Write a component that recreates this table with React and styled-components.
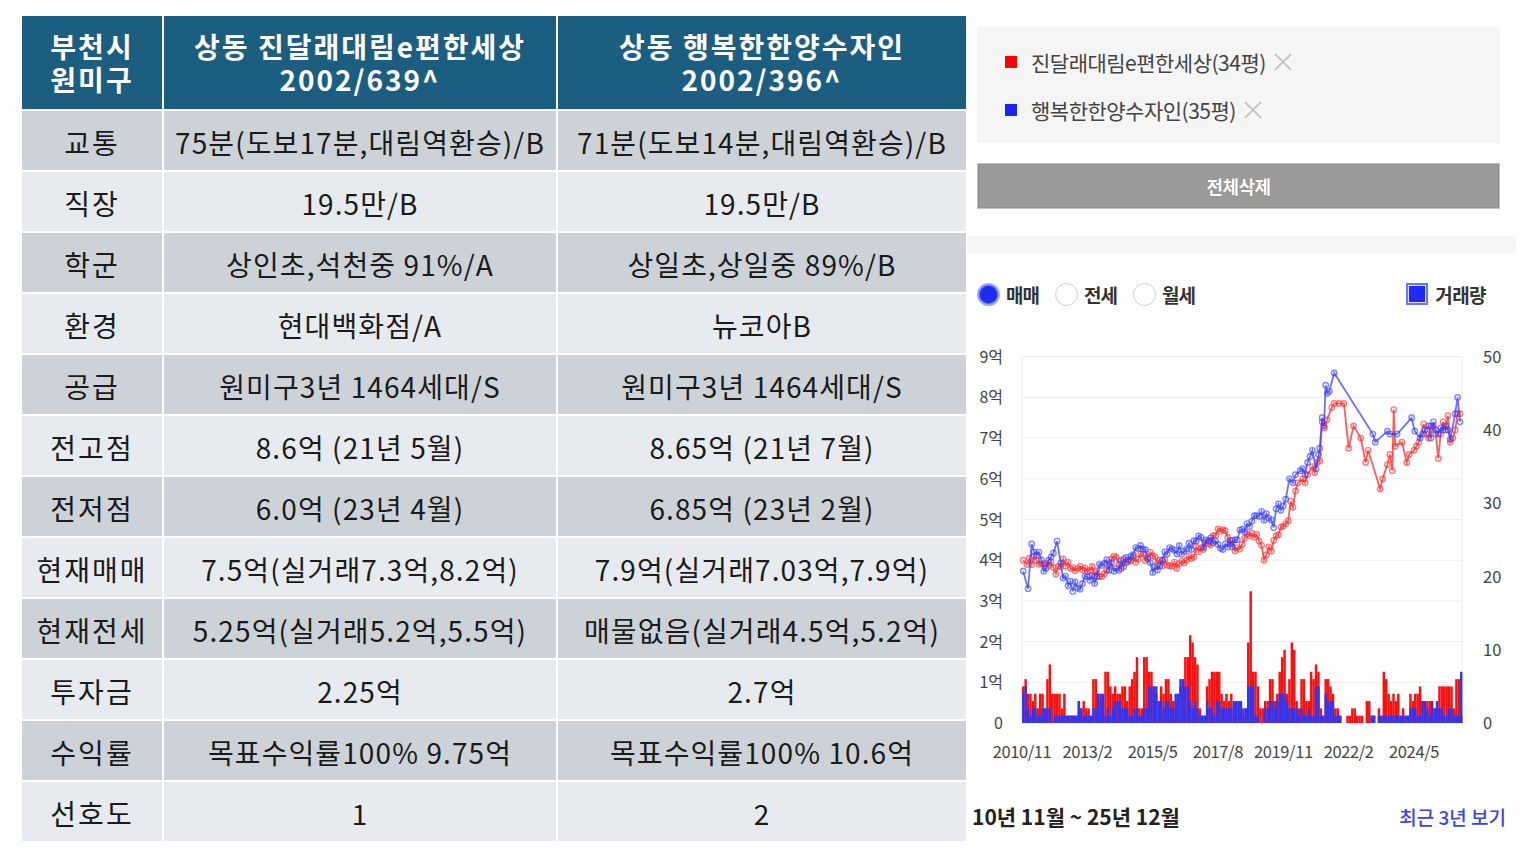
import React from 'react';
import styled, { createGlobalStyle } from 'styled-components';

const GlobalStyle = createGlobalStyle`
  html, body { margin: 0; padding: 0; background: #fff; }
  body { font-family: "Noto Sans CJK KR", "Noto Sans", sans-serif; }
  * { box-sizing: border-box; }
`;

const Page = styled.div`
  display: flex;
  align-items: flex-start;
  width: 1520px;
  height: 855px;
  overflow: hidden;
`;

const Table = styled.div`
  margin: 16px 0 0 22px;
  display: grid;
  grid-template-columns: 140px 392px 408px;
  grid-template-rows: 93px repeat(12, 59px);
  gap: 2px;
  background: #fff;
`;

const HeadCell = styled.div`
  background: #1b5e80;
  color: #fff;
  font-weight: 700;
  font-size: 28px;
  line-height: 33px;
  letter-spacing: 2px;
  display: flex;
  align-items: center;
  justify-content: center;
  text-align: center;
  white-space: pre-line;
`;

const BodyCell = styled.div`
  background: ${p => (p.$dark ? '#cdd2d9' : '#e7eaee')};
  color: #1a1a1a;
  font-size: 28px;
  padding-top: 2px;
  display: flex;
  align-items: center;
  justify-content: center;
  white-space: nowrap;
  letter-spacing: ${p => (p.$label ? '2px' : '1.1px')};
`;

const Side = styled.div`
  width: 549px;
  margin-left: 1px;
  padding-top: 27px;
  display: flex;
  flex-direction: column;
`;

const LegendBox = styled.div`
  margin: 0 16px 0 10px;
  height: 116px;
  background: #f5f5f5;
  padding: 11px 0 9px 28px;
  display: flex;
  flex-direction: column;
`;

const LegendRow = styled.div`
  height: 48px;
  display: flex;
  align-items: center;
`;

const Swatch = styled.span`
  width: 12px;
  height: 12px;
  background: ${p => p.$color};
  margin-right: 14px;
  flex: none;
`;

const LegendText = styled.span`
  font-size: 21px;
  color: #444;
  letter-spacing: -0.5px;
`;

const RemoveIcon = styled.svg`
  width: 20px;
  height: 20px;
  margin-left: 7px;
  flex: none;
`;

const ClearButton = styled.div`
  margin: 20px 16px 0 10px;
  height: 46px;
  background: #9a9a9a;
  border: 1px solid #c4c4c4;
  box-shadow: inset 0 0 0 1px #8e8e8e;
  color: #fff;
  font-weight: 700;
  font-size: 18px;
  letter-spacing: -0.6px;
  text-shadow: 0 0 1px #6d6d6d;
  display: flex;
  align-items: center;
  justify-content: center;
`;

const Strip = styled.div`
  margin-top: 27px;
  height: 18px;
  background: #f6f6f6;
`;

const RadioRow = styled.div`
  margin-top: 28px;
  height: 24px;
  display: flex;
  align-items: center;
  padding: 0 30px 0 10px;
`;

const Radio = styled.span`
  width: 23px;
  height: 23px;
  border-radius: 50%;
  flex: none;
  border: ${p => (p.$on ? '2px solid #9da8ff' : '1.5px solid #cfcfcf')};
  background: ${p => (p.$on ? '#1f2cf0' : '#fff')};
  box-shadow: ${p => (p.$on ? 'inset 0 0 0 1px #5563ff' : 'none')};
`;

const OptionLabel = styled.span`
  font-weight: 700;
  font-size: 19px;
  color: #333;
  letter-spacing: -1px;
  margin: 0 16px 0 6px;
`;

const Spacer = styled.span`
  flex: 1;
`;

const Check = styled.span`
  width: 22px;
  height: 22px;
  flex: none;
  background: #1f2cf5;
  border: 2px solid #6a76ff;
  box-shadow: inset 0 0 0 1px #dfe2ff;
`;

const CheckLabel = styled.span`
  font-weight: 700;
  font-size: 19px;
  color: #333;
  letter-spacing: -0.6px;
  margin-left: 7px;
`;

const ChartSvg = styled.svg`
  display: block;
  width: 549px;
  height: 470px;
  font-family: "Noto Sans CJK KR", "Noto Sans", sans-serif;
`;

const BottomRow = styled.div`
  margin-top: 25px;
  height: 30px;
  padding: 0 10px 0 5px;
  display: flex;
  align-items: center;
  justify-content: space-between;
`;

const DateRange = styled.span`
  font-weight: 700;
  font-size: 21px;
  color: #222;
  letter-spacing: 0;
`;

const RecentLink = styled.span`
  font-size: 19px;
  font-weight: 500;
  color: #3b45e6;
  letter-spacing: 0;
`;

/* ---------- data ---------- */

const rows = [
  ['교통', '75분(도보17분,대림역환승)/B', '71분(도보14분,대림역환승)/B'],
  ['직장', '19.5만/B', '19.5만/B'],
  ['학군', '상인초,석천중 91%/A', '상일초,상일중 89%/B'],
  ['환경', '현대백화점/A', '뉴코아B'],
  ['공급', '원미구3년 1464세대/S', '원미구3년 1464세대/S'],
  ['전고점', '8.6억 (21년 5월)', '8.65억 (21년 7월)'],
  ['전저점', '6.0억 (23년 4월)', '6.85억 (23년 2월)'],
  ['현재매매', '7.5억(실거래7.3억,8.2억)', '7.9억(실거래7.03억,7.9억)'],
  ['현재전세', '5.25억(실거래5.2억,5.5억)', '매물없음(실거래4.5억,5.2억)'],
  ['투자금', '2.25억', '2.7억'],
  ['수익률', '목표수익률100% 9.75억', '목표수익률100% 10.6억'],
  ['선호도', '1', '2'],
];

const X0 = 1022, DX = 2.42, Y0 = 722, PY = 40.7, VY = 7.32;
const xm = m => X0 + m * DX;
const yp = v => Y0 - v * PY;
const yv = u => Y0 - u * VY;

function rng(seed) {
  let s = seed;
  return () => {
    s |= 0; s = (s + 0x6d2b79f5) | 0;
    let t = Math.imul(s ^ (s >>> 15), 1 | s);
    t = (t + Math.imul(t ^ (t >>> 7), 61 | t)) ^ t;
    return ((t ^ (t >>> 14)) >>> 0) / 4294967296;
  };
}

function interp(a, m) {
  if (m <= a[0][0]) return a[0][1];
  for (let i = 1; i < a.length; i++) {
    if (m <= a[i][0]) {
      const [m0, v0] = a[i - 1], [m1, v1] = a[i];
      return v0 + ((v1 - v0) * (m - m0)) / (m1 - m0);
    }
  }
  return a[a.length - 1][1];
}

function buildSeries(early, late, cutoff, seed, amp) {
  const r = rng(seed);
  const pts = [...early];
  for (let m = 1; m <= cutoff; m++) {
    if (early.some(a => Math.abs(a[0] - m) < 0.6)) continue;
    pts.push([m, interp(early, m) + (r() - 0.5) * 2 * amp]);
  }
  pts.sort((p, q) => p[0] - q[0]);
  return [...pts, ...late];
}

const redEarly = [[0.5,4.0],[3,4.05],[7,3.9],[12,3.95],[14,3.66],[17,4.03],[20,3.8],[24,3.85],[28,3.75],[32,3.6],[38,4.1],[40,3.9],[47,3.95],[53,4.2],[57,4.0],[64,3.8],[69,4.1],[74,4.3],[80,4.6],[83,4.75],[86,4.4],[90,4.27],[94,4.6],[98,4.47],[100,4.0],[105,4.6],[109,4.9]];
const redLate = [[111,5.45],[112,5.3],[113,5.7],[114,5.9],[116,6.0],[117,5.9],[118,6.1],[120,6.3],[121,6.15],[122,6.4],[123,6.44],[124,7.4],[125,7.25],[126,7.45],[128,7.75],[129,7.85],[131,7.85],[133,7.85],[135,6.75],[137,7.3],[140,7.0],[142,6.4],[143,6.7],[148,5.75],[149,6.0],[151,6.35],[152,6.6],[153,6.2],[153.6,7.7],[154.2,6.8],[157,6.9],[159,6.4],[160,6.6],[162,6.7],[163,6.8],[164,6.9],[166,7.35],[167,7.1],[168,7.0],[169,7.3],[170,7.3],[171,7.1],[172,6.5],[173,7.1],[174,7.4],[175,7.2],[176,7.55],[177,6.9],[178,7.0],[179,7.2],[180,7.6],[181,7.6]];

const blueEarly = [[0.5,3.73],[2.5,3.3],[4,4.4],[7,4.2],[9,3.73],[11,4.0],[14.5,4.47],[17,3.56],[19,3.37],[25,3.43],[31,3.6],[32,3.9],[39,3.8],[45,4.1],[50,4.27],[54,3.7],[60,4.15],[68,4.27],[72,4.47],[80,4.47],[84,4.4],[89,4.5],[93,4.9],[95,4.96],[99,5.2],[104,4.8],[105,5.26],[109,5.5]];
const blueLate = [[110.5,6.0],[112,5.9],[113,6.1],[115,6.2],[116,6.25],[117,6.1],[118,6.4],[119,6.55],[120,6.7],[121.5,6.25],[122.5,6.6],[123,6.75],[124,7.5],[124.8,7.3],[125.5,8.3],[126.2,8.1],[127,8.15],[129,8.6],[145,7.1],[146,6.9],[151,7.17],[152,7.1],[155,7.1],[161,7.5],[162.3,7.17],[164.5,7.0],[165.5,7.1],[166.5,7.2],[168,7.3],[169,7.0],[170,7.4],[171,7.2],[172,7.1],[173,7.25],[174,7.2],[175,7.3],[176,7.2],[177,6.97],[179,7.6],[180,8.0],[181,7.4]];

const redSeries = buildSeries(redEarly, redLate, 110, 7, 0.14);
const blueSeries = buildSeries(blueEarly, blueLate, 109, 23, 0.16);

const volSegments = [[0,1,5,5],[2,3,4,2],[4,5,3,2],[6,6,2,1],[7,8,4,2],[9,9,2,2],[10,11,7,2],[12,12,4,0],[13,15,4,1],[16,17,3,1],[18,22,1,1],[23,24,2,3],[25,27,2,1],[28,28,1,1],[29,30,6,2],[31,33,4,4],[34,35,7,2],[36,37,5,2],[38,40,4,3],[41,42,5,2],[43,43,3,2],[44,45,5,1],[46,47,8,2],[48,49,2,1],[50,51,9,3],[52,53,7,5],[54,55,5,5],[56,58,4,3],[59,60,6,3],[61,62,4,2],[63,64,3,4],[65,66,5,6],[67,68,10,5],[69,70,11,3],[71,71,9,3],[72,72,8,2],[73,74,2,1],[75,75,1,1],[76,77,5,3],[78,79,6,2],[80,81,7,3],[82,82,4,2],[83,86,4,2],[87,90,2,3],[91,92,2,2],[93,93,11,5],[94,94,18,5],[95,95,7,5],[96,97,6,1],[98,99,2,0],[100,101,3,2],[102,103,6,3],[104,105,3,3],[106,106,7,4],[107,107,9,4],[108,108,10,4],[109,109,4,3],[110,110,6,2],[111,112,10,2],[113,114,2,2],[115,116,6,2],[117,118,3,2],[119,120,6,1],[121,122,7,5],[123,124,1,1],[125,126,6,4],[127,128,4,3],[129,131,1,1],[134,136,1,0],[137,138,2,0],[139,140,1,0],[142,143,3,0],[144,145,1,1],[147,148,2,1],[149,150,6,1],[151,153,3,1],[154,155,3,1],[156,159,1,1],[160,161,3,2],[162,162,4,2],[163,164,5,2],[165,166,3,3],[167,168,2,2],[169,171,2,3],[172,177,5,2],[178,178,2,1],[179,180,6,1],[181,181,1,7]];

function buildVolumes() {
  const r = rng(91);
  const red = new Array(182).fill(0);
  const blue = new Array(182).fill(0);
  volSegments.forEach(([a, b, rv, bv]) => {
    for (let m = a; m <= b; m++) {
      let rr = rv, bb = bv;
      if (b > a) {
        const k = r();
        if (k < 0.2 && rr > 1) rr -= 1;
        else if (k > 0.8) rr += 1;
        const k2 = r();
        if (k2 < 0.2 && bb > 1) bb -= 1;
      }
      red[m] = rr;
      blue[m] = bb;
    }
  });
  return { red, blue };
}
const volumes = buildVolumes();

const toPath = pts => pts.map((p, i) => `${i ? 'L' : 'M'}${xm(p[0]).toFixed(1)},${yp(p[1]).toFixed(1)}`).join('');

const xTicks = [[0, '2010/11'], [27, '2013/2'], [54, '2015/5'], [81, '2017/8'], [108, '2019/11'], [135, '2022/2'], [162, '2024/5']];

function Chart() {
  const grid = [];
  for (let k = 0; k <= 9; k++) grid.push(k);
  return (
    <ChartSvg viewBox="967 305 549 470">
      <rect x={X0} y={yp(9)} width={440} height={9 * PY} fill="none" stroke="#efefef" strokeWidth="1" />
      {grid.map(k => (
        <line key={k} x1={X0} x2={X0 + 440} y1={yp(k)} y2={yp(k)} stroke="#eeeeee" strokeWidth="1" />
      ))}
      {grid.map(k => (
        <text key={'l' + k} x={1003} y={yp(k) + 6} textAnchor="end" fontSize="16" fill="#444">
          {k === 0 ? '0' : `${k}억`}
        </text>
      ))}
      {[0, 10, 20, 30, 40, 50].map(v => (
        <text key={'r' + v} x={1483} y={yv(v) + 6} fontSize="16.5" fill="#444">{v}</text>
      ))}
      {xTicks.map(([m, t]) => (
        <text key={t} x={xm(m)} y={757} textAnchor="middle" fontSize="16.5" fill="#444" letterSpacing="-0.4">{t}</text>
      ))}
      {volumes.red.map((u, m) => u > 0 && (
        <rect key={'vr' + m} x={xm(m)} y={yv(u)} width={DX} height={u * VY} fill="#ff0d0d" />
      ))}
      {volumes.blue.map((u, m) => u > 0 && (
        <rect key={'vb' + m} x={xm(m)} y={yv(u)} width={DX} height={u * VY} fill="#3434ec" />
      ))}
      <path d={toPath(redSeries)} fill="none" stroke="rgba(255,30,30,0.72)" strokeWidth="1.8" />
      {redSeries.map((p, i) => (
        <circle key={'cr' + i} cx={xm(p[0])} cy={yp(p[1])} r="2.7" fill="none" stroke="rgba(255,40,40,0.62)" strokeWidth="1.4" />
      ))}
      <path d={toPath(blueSeries)} fill="none" stroke="rgba(50,60,255,0.72)" strokeWidth="1.8" />
      {blueSeries.map((p, i) => (
        <circle key={'cb' + i} cx={xm(p[0])} cy={yp(p[1])} r="2.7" fill="none" stroke="rgba(50,60,255,0.62)" strokeWidth="1.4" />
      ))}
    </ChartSvg>
  );
}

function Remove() {
  return (
    <RemoveIcon viewBox="0 0 20 20">
      <path d="M2 2 L18 18 M18 2 L2 18" stroke="#bdbdbd" strokeWidth="1.7" fill="none" />
    </RemoveIcon>
  );
}

export default function App() {
  return (
    <>
      <GlobalStyle />
      <Page>
        <Table>
          <HeadCell>{'부천시\n원미구'}</HeadCell>
          <HeadCell>{'상동 진달래대림e편한세상\n2002/639^'}</HeadCell>
          <HeadCell>{'상동 행복한한양수자인\n2002/396^'}</HeadCell>
          {rows.map((r, i) => (
            <React.Fragment key={r[0]}>
              <BodyCell $dark={i % 2 === 0} $label>{r[0]}</BodyCell>
              <BodyCell $dark={i % 2 === 0}>{r[1]}</BodyCell>
              <BodyCell $dark={i % 2 === 0}>{r[2]}</BodyCell>
            </React.Fragment>
          ))}
        </Table>
        <Side>
          <LegendBox>
            <LegendRow>
              <Swatch $color="#ff0000" />
              <LegendText>진달래대림e편한세상(34평)</LegendText>
              <Remove />
            </LegendRow>
            <LegendRow>
              <Swatch $color="#1a22ff" />
              <LegendText>행복한한양수자인(35평)</LegendText>
              <Remove />
            </LegendRow>
          </LegendBox>
          <ClearButton>전체삭제</ClearButton>
          <Strip />
          <RadioRow>
            <Radio $on />
            <OptionLabel>매매</OptionLabel>
            <Radio />
            <OptionLabel>전세</OptionLabel>
            <Radio />
            <OptionLabel>월세</OptionLabel>
            <Spacer />
            <Check />
            <CheckLabel>거래량</CheckLabel>
          </RadioRow>
          <Chart />
          <BottomRow>
            <DateRange>10년 11월 ~ 25년 12월</DateRange>
            <RecentLink>최근 3년 보기</RecentLink>
          </BottomRow>
        </Side>
      </Page>
    </>
  );
}
